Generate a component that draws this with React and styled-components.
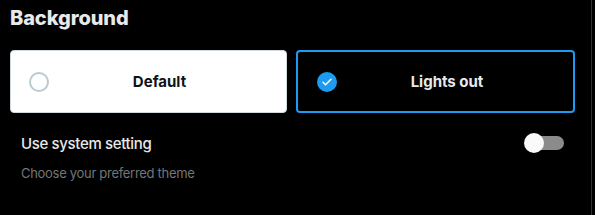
import React from 'react'
import styled, { createGlobalStyle } from 'styled-components'

const GlobalStyle = createGlobalStyle`
  html, body {
    margin: 0;
    background: #000;
  }
  body {
    font-family: Inter, "Noto Sans", "Liberation Sans", sans-serif;
    -webkit-font-smoothing: antialiased;
  }
`

const Panel = styled.section`
  width: 592px;
  height: 215px;
  box-sizing: border-box;
  border-right: 1px solid #2f3336;
  padding: 4px 17px 0 10px;
`

const Title = styled.h2`
  margin: 0;
  font-size: 20px;
  line-height: 28px;
  font-weight: 800;
  color: #e7e9ea;
  letter-spacing: -0.1px;
`

const Options = styled.div`
  display: grid;
  grid-template-columns: 277px 279px;
  gap: 9px;
  margin-top: 18px;
`

const Option = styled.label`
  display: flex;
  align-items: center;
  height: 63px;
  box-sizing: border-box;
  border-radius: 4px;
  padding-right: 16px;
  padding-left: ${p => (p.$selected ? 19 : 18)}px;
  background: ${p => (p.$light ? '#fff' : '#000')};
  border: ${p => (p.$selected ? '2px solid #1d9bf0' : '1px solid #cfd9de')};
  cursor: pointer;
`

const Radio = styled.span`
  flex: none;
  width: 20px;
  height: 20px;
  box-sizing: border-box;
  border-radius: 50%;
  display: flex;
  align-items: center;
  justify-content: center;
  border: ${p => (p.$checked ? 'none' : '2px solid #b9cad3')};
  background: ${p => (p.$checked ? '#1d9bf0' : 'transparent')};
`

const OptionText = styled.span`
  flex: 1;
  text-align: center;
  font-size: 15px;
  font-weight: 700;
  color: ${p => (p.$light ? '#0f1419' : '#e7e9ea')};
`

const SettingRow = styled.div`
  display: flex;
  align-items: center;
  justify-content: space-between;
  margin-top: 20px;
  padding: 0 10px 0 11px;
`

const SettingLabel = styled.span`
  font-size: 15px;
  font-weight: 500;
  letter-spacing: -0.35px;
  color: #e7e9ea;
`

const Switch = styled.span`
  position: relative;
  width: 40px;
  height: 20px;
  display: inline-block;
`

const Track = styled.span`
  position: absolute;
  left: 4px;
  right: 0;
  top: 3px;
  height: 14px;
  border-radius: 7px;
  background: #8b8b8b;
`

const Knob = styled.span`
  position: absolute;
  left: 0;
  top: 0;
  width: 20px;
  height: 20px;
  border-radius: 50%;
  background: #fafafa;
`

const Hint = styled.p`
  margin: 12px 0 0 11px;
  font-size: 13px;
  letter-spacing: -0.3px;
  color: #71767b;
`

const Check = () => (
  <svg width="12" height="12" viewBox="0 0 24 24">
    <path d="M4 12.5l5 5L20 6.5" fill="none" stroke="#fff" strokeWidth="3" strokeLinecap="round" strokeLinejoin="round" />
  </svg>
)

export default function App() {
  return (
    <>
      <GlobalStyle />
      <Panel>
        <Title>Background</Title>
        <Options>
          <Option $light>
            <Radio />
            <OptionText $light>Default</OptionText>
          </Option>
          <Option $selected>
            <Radio $checked>
              <Check />
            </Radio>
            <OptionText>Lights out</OptionText>
          </Option>
        </Options>
        <SettingRow>
          <SettingLabel>Use system setting</SettingLabel>
          <Switch>
            <Track />
            <Knob />
          </Switch>
        </SettingRow>
        <Hint>Choose your preferred theme</Hint>
      </Panel>
    </>
  )
}
